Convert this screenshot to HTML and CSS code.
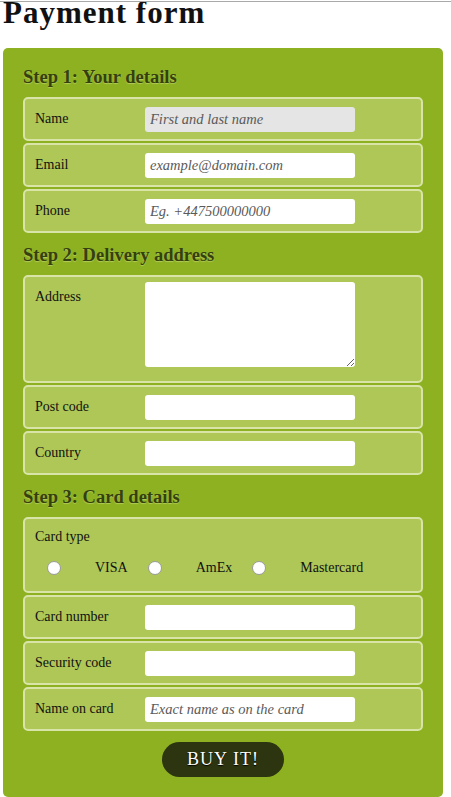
FILE: index.html
```
<!DOCTYPE html>
<html lang="en">
<head>
<meta charset="utf-8">
<title>Payment form</title>
<link rel="stylesheet" href="styles.css">
</head>
<body>
<h1 class="title">Payment form</h1>
<form class="payment">
  <section class="step">
    <h2 class="step-title">Step 1: Your details</h2>
    <div class="rows">
      <div class="row"><label class="lbl" for="name">Name</label><input class="field field-focus" id="name" type="text" placeholder="First and last name"></div>
      <div class="row"><label class="lbl" for="email">Email</label><input class="field" id="email" type="email" placeholder="example@domain.com"></div>
      <div class="row"><label class="lbl" for="phone">Phone</label><input class="field" id="phone" type="tel" placeholder="Eg. +447500000000"></div>
    </div>
  </section>
  <section class="step">
    <h2 class="step-title">Step 2: Delivery address</h2>
    <div class="rows">
      <div class="row row-top"><label class="lbl" for="address">Address</label><textarea class="field area" id="address" rows="5"></textarea></div>
      <div class="row"><label class="lbl" for="postcode">Post code</label><input class="field" id="postcode" type="text"></div>
      <div class="row"><label class="lbl" for="country">Country</label><input class="field" id="country" type="text"></div>
    </div>
  </section>
  <section class="step step-last">
    <h2 class="step-title">Step 3: Card details</h2>
    <div class="rows">
      <div class="row row-card">
        <div class="card-legend">Card type</div>
        <div class="radios">
          <div class="opt"><input class="radio" type="radio" name="cardtype" id="visa"><label class="opt-lbl" for="visa">VISA</label></div>
          <div class="opt"><input class="radio" type="radio" name="cardtype" id="amex"><label class="opt-lbl" for="amex">AmEx</label></div>
          <div class="opt"><input class="radio" type="radio" name="cardtype" id="mastercard"><label class="opt-lbl" for="mastercard">Mastercard</label></div>
        </div>
      </div>
      <div class="row"><label class="lbl" for="cardnumber">Card number</label><input class="field" id="cardnumber" type="text"></div>
      <div class="row"><label class="lbl" for="secure">Security code</label><input class="field" id="secure" type="text"></div>
      <div class="row"><label class="lbl" for="namecard">Name on card</label><input class="field" id="namecard" type="text" placeholder="Exact name as on the card"></div>
    </div>
  </section>
  <button class="buy" type="button">Buy it!</button>
</form>
</body>
</html>
```
FILE: styles.css
```
html { background: #fff; }
body {
  margin: 1px 0 0 0;
  padding: 0 3px;
  border-top: 1px solid #a9a9a9;
  font-family: "Liberation Serif", serif;
  color: #111;
}
.title {
  margin: 0 0 24px 0;
  font-size: 31px;
  line-height: 22px;
  letter-spacing: 1px;
  font-weight: bold;
  color: #111;
}
.payment {
  box-sizing: border-box;
  width: 440px;
  padding: 20px;
  background: #8db121;
  border-radius: 5px;
}
.step { margin-bottom: 13px; }
.step-last { margin-bottom: 11px; }
.step-title {
  margin: 0 0 11px 0;
  font-size: 18.5px;
  line-height: 18px;
  font-weight: bold;
  color: #34400f;
  text-shadow: 0 1px 1px #b3cc5c;
}
.rows {
  display: flex;
  flex-direction: column;
  gap: 2px;
}
.row {
  display: flex;
  align-items: center;
  padding: 5px 10px;
  border: 2px solid #d8e4a8;
  border-radius: 5px;
  background: #aec757;
}
.row-top { align-items: flex-start; }
.lbl {
  width: 110px;
  flex: none;
  font-size: 14px;
  line-height: 30px;
}
.field {
  box-sizing: border-box;
  width: 210px;
  height: 25px;
  padding: 5px;
  border: none;
  border-radius: 3px;
  background: #fff;
  font: italic 14.5px "Liberation Serif", serif;
  color: #333;
  outline: none;
}
.field::placeholder { color: #5a5a5a; }
.field-focus { background: #e5e5e5; }
.area {
  height: 85px;
  margin-bottom: 9px;
  display: block;
}
.row-card {
  flex-direction: column;
  align-items: stretch;
}
.card-legend {
  font-size: 14px;
  line-height: 26px;
}
.radios {
  display: flex;
  align-items: center;
  height: 36px;
  padding-left: 12px;
  gap: 20px;
}
.opt {
  display: flex;
  align-items: center;
}
.radio {
  appearance: none;
  -webkit-appearance: none;
  box-sizing: border-box;
  width: 14px;
  height: 14px;
  margin: 0 34px 0 0;
  border: 1px solid #9a9a9a;
  border-radius: 50%;
  background: #fff;
}
.opt-lbl {
  font-size: 14px;
  line-height: 20px;
}
.buy {
  display: block;
  margin: 0 auto;
  height: 35px;
  padding: 0 25px;
  border: none;
  border-radius: 20px;
  background: #2c3410;
  color: #fff;
  font: 18px "Liberation Serif", serif;
  letter-spacing: 1px;
  text-transform: uppercase;
  text-shadow: 0 1px 1px #000;
}
```
